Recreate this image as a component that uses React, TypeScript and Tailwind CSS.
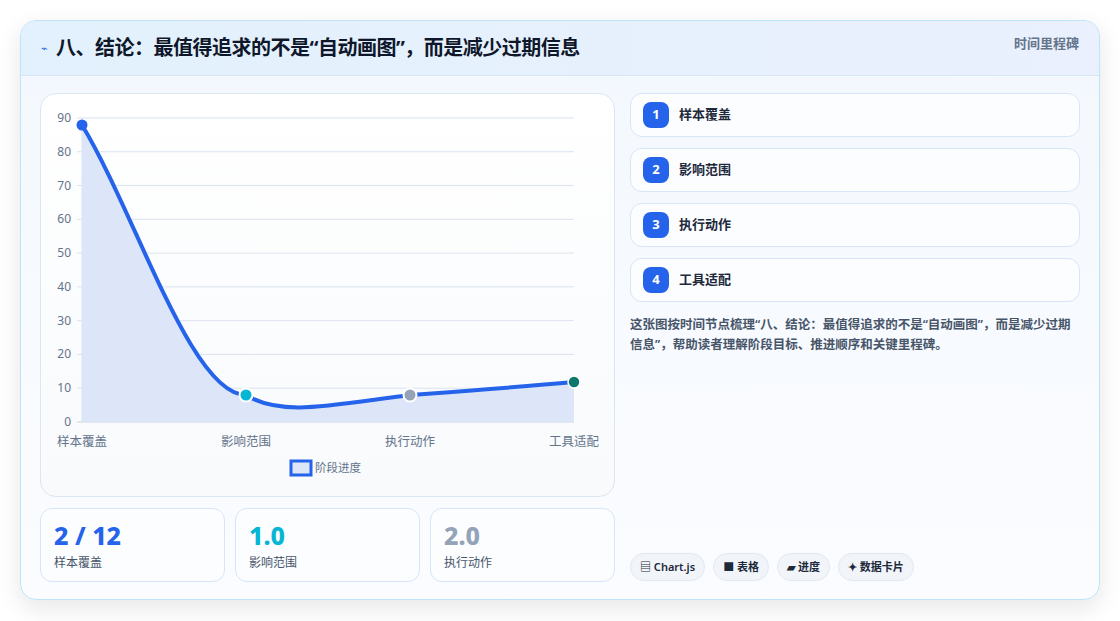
const font = { fontFamily: '"Noto Sans", "Noto Sans CJK SC", sans-serif' };

function Chart() {
  const ys = [0, 10, 20, 30, 40, 50, 60, 70, 80, 90];
  const y = (v: number) => 421 - v * 3.378;
  const xs = [81, 245, 409, 573];
  const labels = ["样本覆盖", "影响范围", "执行动作", "工具适配"];
  const line =
    "M81,124 C135,213 190,394 245,394 C280,416 330,404 409,394 C463,390 518,386 573,381";
  return (
    <svg viewBox="40 93 574 403" width={574} height={403} className="absolute left-0 top-0">
      {ys.map((v) => (
        <g key={v}>
          <line x1={76} x2={573} y1={y(v)} y2={y(v)} stroke={v === 0 ? "#cbd5e1" : "#dbe3f0"} strokeWidth={1} />
          <text x={70} y={y(v) + 4} textAnchor="end" fontSize={12} fill="#64748b" style={font}>
            {v}
          </text>
        </g>
      ))}
      <line x1={81} x2={81} y1={117} y2={421} stroke="#dbe3f0" />
      <path d={line + " L573,421 L81,421 Z"} fill="#dde5f8" />
      <path d={line} fill="none" stroke="#2563eb" strokeWidth={4} />
      <circle cx={81} cy={124} r={5.5} fill="#2563eb" />
      <circle cx={245} cy={394} r={6.5} fill="#06b6d4" stroke="#fff" strokeWidth={2} />
      <circle cx={409} cy={394} r={6.5} fill="#94a3b8" stroke="#fff" strokeWidth={2} />
      <circle cx={573} cy={381} r={6} fill="#0f766e" stroke="#fff" strokeWidth={1.5} />
      {labels.map((l, i) => (
        <text key={l} x={xs[i]} y={445} textAnchor="middle" fontSize={12.5} fill="#64748b" style={font}>
          {l}
        </text>
      ))}
      <rect x={290} y={460} width={20} height={14} fill="#dde5f8" stroke="#2563eb" strokeWidth={3} />
      <text x={314} y={471} fontSize={11.5} fill="#64748b" style={font}>
        阶段进度
      </text>
    </svg>
  );
}

const steps = ["样本覆盖", "影响范围", "执行动作", "工具适配"];
const stats = [
  { v: "2 / 12", l: "样本覆盖", c: "text-[#2563eb]" },
  { v: "1.0", l: "影响范围", c: "text-[#06b6d4]" },
  { v: "2.0", l: "执行动作", c: "text-[#94a3b8]" },
];
const tags = ["▤ Chart.js", "■ 表格", "▰ 进度", "✦ 数据卡片"];

export default function App() {
  return (
    <div className="w-[1120px] h-[621px] bg-white pt-5 px-5" style={font}>
      <div className="w-[1080px] h-[580px] rounded-2xl border border-[#bfe3f7] bg-gradient-to-b from-[#f3f8fe] to-[#fbfcff] shadow-[0_8px_24px_rgba(15,23,42,0.10)] overflow-hidden flex flex-col">
        <div className="h-[55px] shrink-0 flex items-center justify-between px-5 bg-gradient-to-r from-[#e2f1fd] to-[#eaf0fd] border-b border-[#d6e6f7]">
          <div className="flex items-center gap-2">
            <span className="text-[#2563eb] text-[11px]">⌁</span>
            <h1 className="text-[20px] font-bold text-[#0f172a] tracking-tight">
              八、结论：最值得追求的不是“自动画图”，而是减少过期信息
            </h1>
          </div>
          <span className="text-[13px] text-[#64748b] font-semibold self-start mt-[13px]">时间里程碑</span>
        </div>
        <div className="flex gap-[15px] px-[19px] pt-[17px]">
          <div className="w-[575px] flex flex-col gap-[11px]">
            <div className="relative h-[404px] rounded-2xl border border-[#dbe6f3] bg-gradient-to-b from-white to-[#f8fafc]">
              <Chart />
            </div>
            <div className="grid grid-cols-3 gap-[10px]">
              {stats.map((s) => (
                <div key={s.l} className="h-[74px] rounded-xl border border-[#d6e6f7] bg-[#fbfdff] px-[13px] pt-[10px]">
                  <div className={`text-[25px] font-extrabold leading-[32px] ${s.c}`}>{s.v}</div>
                  <div className="text-[12px] text-[#475569] mt-[3px]">{s.l}</div>
                </div>
              ))}
            </div>
          </div>
          <div className="flex-1 flex flex-col">
            <div className="flex flex-col gap-[11px]">
              {steps.map((s, i) => (
                <div key={s} className="h-[44px] rounded-xl border border-[#d6e6f7] bg-[#fbfdff] flex items-center gap-[10px] px-3">
                  <span className="w-[26px] h-[26px] rounded-lg bg-[#2563eb] text-white text-[13px] font-bold flex items-center justify-center">
                    {i + 1}
                  </span>
                  <span className="text-[13px] font-semibold text-[#1e293b]">{s}</span>
                </div>
              ))}
            </div>
            <p className="mt-[13px] text-[12.5px] leading-[20px] font-semibold text-[#475569]">
              这张图按时间节点梳理“八、结论：最值得追求的不是“自动画图”，而是减少过期信息”，帮助读者理解阶段目标、推进顺序和关键里程碑。
            </p>
            <div className="mt-auto flex gap-2 mb-[1px]">
              {tags.map((t) => (
                <span key={t} className="h-[28px] px-[9px] rounded-full border border-[#e2e8f0] bg-[#f1f5f9] text-[11px] font-semibold text-[#1e293b] flex items-center">
                  {t}
                </span>
              ))}
            </div>
          </div>
        </div>
      </div>
    </div>
  );
}
